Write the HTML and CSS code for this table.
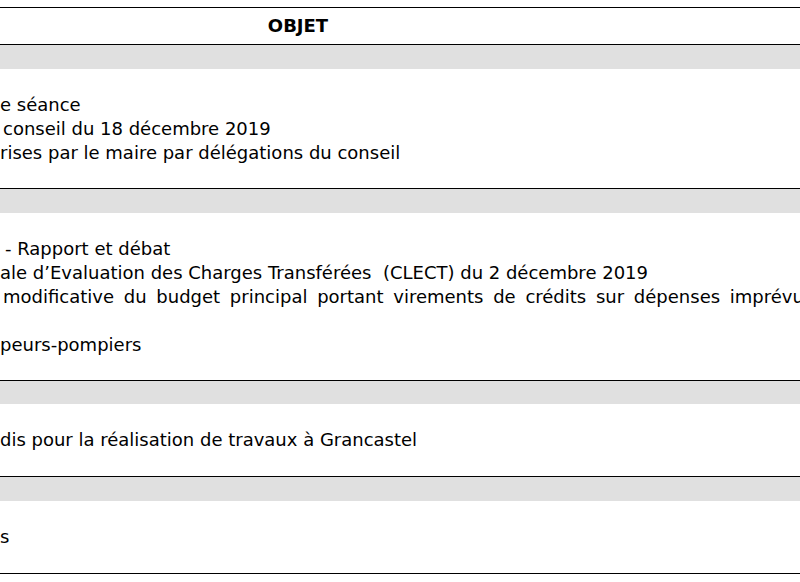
FILE: index.html
```html
<!DOCTYPE html>
<html lang="fr">
<head>
<meta charset="utf-8">
<title>Ordre du jour</title>
<link rel="stylesheet" href="styles.css">
</head>
<body>
<div class="agenda">
  <div class="agenda-head">OBJET</div>

  <section class="section">
    <div class="band"></div>
    <div class="items">
      <div class="item">e séance</div>
      <div class="item item--gap">conseil du 18 décembre 2019</div>
      <div class="item">rises par le maire par délégations du conseil</div>
    </div>
  </section>

  <section class="section">
    <div class="band"></div>
    <div class="items">
      <div class="item item--dash">- Rapport et débat</div>
      <div class="item">ale d’Evaluation des Charges Transférées&nbsp; (CLECT) du 2 décembre 2019</div>
      <div class="item item--justified">modificative du budget principal portant virements de crédits sur dépenses imprévues</div>
      <div class="item">peurs-pompiers</div>
    </div>
  </section>

  <section class="section">
    <div class="band band--thin"></div>
    <div class="items items--single">
      <div class="item">dis pour la réalisation de travaux à Grancastel</div>
    </div>
  </section>

  <section class="section">
    <div class="band"></div>
    <div class="items items--single">
      <div class="item">s</div>
    </div>
  </section>
</div>
</body>
</html>
```

FILE: styles.css
```css
html, body {
  margin: 0;
  padding: 0;
  background: #ffffff;
}

body {
  overflow: hidden;
  font-family: "DejaVu Sans", "Liberation Sans", sans-serif;
  font-size: 18px;
  line-height: 24px;
  color: #000000;
}

.agenda {
  margin-top: 7px;
  border-top: 1px solid #000000;
}

.agenda-head {
  height: 36px;
  display: flex;
  align-items: center;
  justify-content: center;
  padding-right: 204px;
  font-weight: bold;
}

.section {
  border-top: 1px solid #000000;
}

.band {
  height: 24px;
  background: #e0e0e0;
}

.band--thin {
  height: 23px;
}

.items {
  padding: 24px 0 23px;
}

.items--single {
  padding-bottom: 24px;
}

.item {
  white-space: nowrap;
}

.item--gap {
  padding-left: 3px;
}

.item--dash {
  padding-left: 5px;
}

.item--justified {
  padding-left: 3px;
  padding-bottom: 24px;
  word-spacing: 4px;
}

.section:last-child {
  border-bottom: 1px solid #000000;
}
```
